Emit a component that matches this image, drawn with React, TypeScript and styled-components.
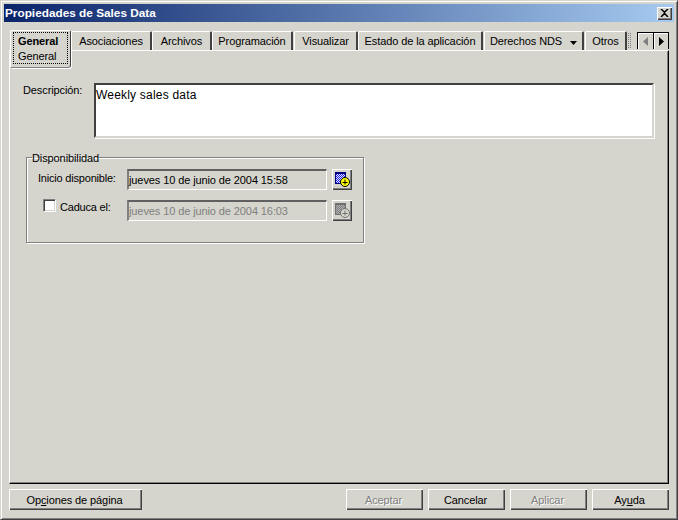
import React from 'react';
import styled, { createGlobalStyle } from 'styled-components';

const face = '#d5d4cd';

const GlobalStyle = createGlobalStyle`
  html, body {
    margin: 0;
    padding: 0;
    background: ${face};
    overflow: hidden;
  }
  * {
    box-sizing: border-box;
  }
`;

const Window = styled.div`
  width: 678px;
  height: 520px;
  padding: 3px;
  background: ${face};
  border-top: 1px solid ${face};
  border-left: 1px solid ${face};
  border-right: 1px solid #404040;
  border-bottom: 1px solid #404040;
  box-shadow: inset 1px 1px 0 #fff, inset -1px -1px 0 #808080;
  display: flex;
  flex-direction: column;
  font-family: 'Liberation Sans', Arial, sans-serif;
  font-size: 11px;
  letter-spacing: -0.1px;
  color: #000;
`;

const TitleBar = styled.div`
  height: 18px;
  flex: none;
  padding: 0 2px 0 1px;
  background: linear-gradient(to right, #0a246a, #a6caf0);
  display: flex;
  align-items: center;
  justify-content: space-between;
`;

const Title = styled.span`
  color: #fff;
  font-size: 11.8px;
  font-weight: 700;
  letter-spacing: 0;
`;

const CloseButton = styled.button`
  width: 15px;
  height: 13px;
  padding: 0;
  background: ${face};
  border: none;
  box-shadow: inset 1px 1px 0 #fff, inset -1px -1px 0 #404040, inset -2px -2px 0 #808080;
  display: flex;
  align-items: center;
  justify-content: center;
`;

const Content = styled.div`
  flex: 1;
  display: flex;
  flex-direction: column;
  padding: 8px 5px 0 5px;
  min-height: 0;
`;

const TabStrip = styled.div`
  height: 20px;
  flex: none;
  display: flex;
  align-items: flex-start;
  padding-left: 1px;
`;

const Tab = styled.div<{ $left: number; $width: number }>`
  width: ${p => p.$width}px;
  margin-left: ${p => p.$left}px;
  height: 19px;
  margin-top: 1px;
  flex: none;
  padding-top: 3px;
  text-align: center;
  white-space: nowrap;
  border-top: 1px solid #fff;
  border-left: 1px solid #fff;
  border-right: 2px solid #404040;
  border-top-left-radius: 2px;
  border-top-right-radius: 2px;
`;

const ActiveTab = styled.div`
  position: relative;
  z-index: 1;
  width: 61px;
  height: 38px;
  flex: none;
  padding: 1px 2px;
  background: ${face};
  border-top: 1px solid #fff;
  border-left: 1px solid #fff;
  border-right: 1px solid #404040;
  border-bottom: 1px solid #808080;
  border-radius: 2px 2px 3px 2px;
  box-shadow: 1px 1px 0 #fff;
`;

const ActiveTabFocus = styled.div`
  height: 32px;
  border: 1px dotted #000;
  padding: 1px 0 0 4px;
  display: flex;
  flex-direction: column;
  line-height: 15px;
`;

const BoldLabel = styled.span`
  font-weight: 700;
`;

const TabCaret = styled.svg`
  margin-left: 8px;
  vertical-align: 0;
`;

const ClippedTab = styled.div`
  width: 3px;
  height: 15px;
  margin: 3px 0 0 1px;
  flex: none;
  border-left: 1px dotted #808080;
  border-right: 1px dotted #808080;
`;

const TabScroller = styled.div`
  margin-left: auto;
  margin-top: 2px;
  height: 17px;
  display: flex;
  flex: none;
  border: 1px solid #000;
  border-bottom: none;
`;

const ScrollButton = styled.div`
  width: 15px;
  height: 16px;
  display: flex;
  align-items: center;
  justify-content: center;
  box-shadow: inset 1px 1px 0 #fff;
  & + & {
    border-left: 1px solid #000;
  }
`;

const Panel = styled.div`
  height: 434px;
  flex: none;
  padding: 32px 14px 0 13px;
  border-top: 1px solid #fff;
  border-left: 1px solid #fff;
  border-right: 1px solid #000;
  border-bottom: 1px solid #000;
  box-shadow: inset -1px -1px 0 #808080;
`;

const DescriptionRow = styled.div`
  display: flex;
  align-items: flex-start;
`;

const DescriptionLabel = styled.label`
  width: 71px;
  padding-top: 1px;
  flex: none;
  line-height: 13px;
`;

const DescriptionBox = styled.div`
  width: 560px;
  height: 55px;
  padding: 3px 0 0 0;
  background: #fff;
  font-size: 12px;
  letter-spacing: 0.2px;
  line-height: 14px;
  border-top: 2px solid #404040;
  border-left: 2px solid #404040;
  border-right: 2px solid ${face};
  border-bottom: 2px solid ${face};
  box-shadow: 1px 1px 0 #fff;
`;

const Group = styled.fieldset`
  width: 338px;
  height: 93px;
  margin: 12px 0 0 3px;
  padding: 5px 0 0 0;
  border: 1px solid #808080;
  box-shadow: 1px 1px 0 #fff, inset 1px 1px 0 #fff;
`;

const GroupLegend = styled.legend`
  margin-left: 5px;
  padding: 2px 0 0 0;
  line-height: 12px;
`;

const FieldRow = styled.div`
  height: 21px;
  display: flex;
  align-items: flex-start;
  margin-bottom: 10px;
`;

const FieldLabel = styled.label<{ $top: number }>`
  width: 100px;
  flex: none;
  padding: ${p => p.$top}px 0 0 11px;
  line-height: 13px;
  letter-spacing: -0.2px;
  display: flex;
  align-items: flex-start;
  white-space: nowrap;
`;

const CheckBox = styled.span`
  width: 13px;
  height: 13px;
  flex: none;
  margin: -2px 4px 0 5px;
  background: #fff;
  border-top: 1px solid #808080;
  border-left: 1px solid #808080;
  border-right: 1px solid #fff;
  border-bottom: 1px solid #fff;
  box-shadow: inset 1px 1px 0 #404040, inset -1px -1px 0 ${face};
`;

const DateField = styled.div<{ $disabled?: boolean }>`
  width: 200px;
  height: 21px;
  flex: none;
  padding: 2px 0 0 0;
  line-height: 14px;
  color: ${p => (p.$disabled ? '#808080' : '#000')};
  border-top: 2px solid #606060;
  border-left: 2px solid #808080;
  border-right: 1px solid #fff;
  border-bottom: 1px solid #fff;
`;

const IconButton = styled.button`
  width: 20px;
  height: 21px;
  margin-left: 5px;
  padding: 0 0 1px 0;
  flex: none;
  background: ${face};
  border: none;
  box-shadow: inset 1px 1px 0 #fff, inset -1px -1px 0 #404040, inset -2px -2px 0 #808080;
  display: flex;
  align-items: center;
  justify-content: center;
`;

const Footer = styled.div`
  display: flex;
  justify-content: space-between;
  padding-top: 5px;
`;

const ButtonGroup = styled.div`
  display: flex;
  gap: 5px;
`;

const Button = styled.button<{ $wide?: boolean }>`
  width: ${p => (p.$wide ? 133 : 77)}px;
  height: 21px;
  padding: 1px 2px 0 0;
  background: ${face};
  border: none;
  font: inherit;
  letter-spacing: inherit;
  color: #000;
  box-shadow: inset 1px 1px 0 #fff, inset -1px -1px 0 #404040, inset -2px -2px 0 #808080;
  &:disabled {
    color: #808080;
    text-shadow: 1px 1px 0 #fff;
  }
`;

const CalendarIcon: React.FC<{ disabled?: boolean }> = ({ disabled }) => {
  const grid = disabled ? '#808080' : '#1a1ae6';
  const dot = disabled ? '#b0b0b0' : '#e8e8ff';
  const head = disabled ? '#707070' : '#000080';
  const badge = disabled ? face : '#ffff00';
  const line = disabled ? '#707070' : '#000';
  const id = disabled ? 'ditherOff' : 'ditherOn';
  return (
    <svg width="15" height="15" viewBox="0 0 15 15">
      <defs>
        <pattern id={id} width="2" height="2" patternUnits="userSpaceOnUse">
          <rect width="2" height="2" fill={grid} />
          <rect width="1" height="1" fill={dot} />
          <rect x="1" y="1" width="1" height="1" fill={dot} />
        </pattern>
      </defs>
      <rect x="0.5" y="0.5" width="10" height="11" fill={`url(#${id})`} stroke={head} />
      <rect x="0" y="0" width="11" height="2" fill={head} />
      <circle cx="10" cy="10" r="4.5" fill={badge} stroke={line} />
      <path d="M10 7.5v5M7.5 10.5h5" stroke={line} fill="none" />
    </svg>
  );
};

const App: React.FC = () => {
  return (
    <>
      <GlobalStyle />
      <Window>
        <TitleBar>
          <Title>Propiedades de Sales Data</Title>
          <CloseButton aria-label="Cerrar">
            <svg width="9" height="8" viewBox="0 0 9 8">
              <path d="M1 0l3.5 3.2L8 0M1 8l3.5-3.6L8 8" stroke="#000" strokeWidth="1.5" fill="none" />
            </svg>
          </CloseButton>
        </TitleBar>
        <Content>
          <TabStrip>
            <ActiveTab>
              <ActiveTabFocus>
                <BoldLabel>General</BoldLabel>
                <span>General</span>
              </ActiveTabFocus>
            </ActiveTab>
            <Tab $left={0} $width={81}>Asociaciones</Tab>
            <Tab $left={0} $width={60}>Archivos</Tab>
            <Tab $left={0} $width={81}>Programación</Tab>
            <Tab $left={1} $width={64}>Visualizar</Tab>
            <Tab $left={0} $width={125}>Estado de la aplicación</Tab>
            <Tab $left={1} $width={100}>
              Derechos NDS
              <TabCaret width="7" height="4" viewBox="0 0 7 4">
                <path d="M0 0h7L3.5 4z" fill="#000" />
              </TabCaret>
            </Tab>
            <Tab $left={1} $width={42}>Otros</Tab>
            <ClippedTab />
            <TabScroller>
              <ScrollButton>
                <svg width="5" height="9" viewBox="0 0 5 9">
                  <path d="M5 0v9L0 4.5z" fill="#808080" />
                </svg>
              </ScrollButton>
              <ScrollButton>
                <svg width="5" height="9" viewBox="0 0 5 9">
                  <path d="M0 0v9l5-4.5z" fill="#000" />
                </svg>
              </ScrollButton>
            </TabScroller>
          </TabStrip>
          <Panel>
            <DescriptionRow>
              <DescriptionLabel>Descripción:</DescriptionLabel>
              <DescriptionBox>Weekly sales data</DescriptionBox>
            </DescriptionRow>
            <Group>
              <GroupLegend>Disponibilidad</GroupLegend>
              <FieldRow>
                <FieldLabel $top={3}>Inicio disponible:</FieldLabel>
                <DateField>jueves 10 de junio de 2004 15:58</DateField>
                <IconButton aria-label="Elegir inicio">
                  <CalendarIcon />
                </IconButton>
              </FieldRow>
              <FieldRow>
                <FieldLabel $top={1}>
                  <CheckBox />
                  Caduca el:
                </FieldLabel>
                <DateField $disabled>jueves 10 de junio de 2004 16:03</DateField>
                <IconButton aria-label="Elegir caducidad" disabled>
                  <CalendarIcon disabled />
                </IconButton>
              </FieldRow>
            </Group>
          </Panel>
          <Footer>
            <Button $wide>Op<u>c</u>iones de página</Button>
            <ButtonGroup>
              <Button disabled>Aceptar</Button>
              <Button>Cancelar</Button>
              <Button disabled>Aplicar</Button>
              <Button>Ay<u>u</u>da</Button>
            </ButtonGroup>
          </Footer>
        </Content>
      </Window>
    </>
  );
};

export default App;
